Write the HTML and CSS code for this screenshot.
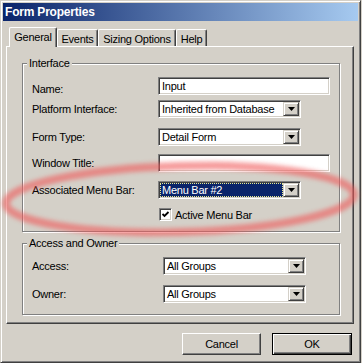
FILE: index.html
```html
<!DOCTYPE html>
<html>
<head>
<meta charset="utf-8">
<link rel="stylesheet" href="styles.css">
</head>
<body>
<div class="window">
  <div class="titlebar">Form Properties</div>
  <div class="body">
    <div class="tabs">
      <div class="tab active">General</div>
      <div class="tab t-events">Events</div>
      <div class="tab t-sizing">Sizing Options</div>
      <div class="tab t-help">Help</div>
    </div>
    <div class="panel">
      <fieldset class="group g-interface">
        <legend>Interface</legend>
        <div class="grid grid-interface">
          <div class="lbl low">Name:</div>
          <div class="edit wide">Input</div>
          <div class="lbl">Platform Interface:</div>
          <div class="combo"><div class="val">Inherited from Database</div><div class="btn"><svg width="7" height="4" viewBox="0 0 7 4"><path d="M0 0h7L3.5 4z"/></svg></div></div>
          <div class="lbl">Form Type:</div>
          <div class="combo"><div class="val">Detail Form</div><div class="btn"><svg width="7" height="4" viewBox="0 0 7 4"><path d="M0 0h7L3.5 4z"/></svg></div></div>
          <div class="lbl">Window Title:</div>
          <div class="edit wide"></div>
          <div class="lbl">Associated Menu Bar:</div>
          <div class="combo sel"><div class="val">Menu Bar #2</div><div class="btn"><svg width="7" height="4" viewBox="0 0 7 4"><path d="M0 0h7L3.5 4z"/></svg></div></div>
          <div class="lbl"></div>
          <div class="check"><span class="box"><svg width="9" height="9" viewBox="0 0 9 9"><path d="M1.5 4 L3.5 6 L7.5 2" fill="none" stroke="#000" stroke-width="1.8"/></svg></span><span>Active Menu Bar</span></div>
        </div>
      </fieldset>
      <fieldset class="group g-access">
        <legend>Access and Owner</legend>
        <div class="grid grid-access">
          <div class="lbl">Access:</div>
          <div class="combo"><div class="val">All Groups</div><div class="btn"><svg width="7" height="4" viewBox="0 0 7 4"><path d="M0 0h7L3.5 4z"/></svg></div></div>
          <div class="lbl">Owner:</div>
          <div class="combo"><div class="val">All Groups</div><div class="btn"><svg width="7" height="4" viewBox="0 0 7 4"><path d="M0 0h7L3.5 4z"/></svg></div></div>
        </div>
      </fieldset>
    </div>
    <div class="buttons">
      <div class="button">Cancel</div>
      <div class="button default">OK</div>
    </div>
  </div>
</div>
<svg class="annot" width="362" height="363" viewBox="0 0 362 363">
  <defs><filter id="soft" x="-10%" y="-50%" width="120%" height="200%"><feGaussianBlur stdDeviation="2"/></filter></defs>
  <ellipse cx="180" cy="199" rx="174" ry="33" transform="rotate(-1.5 180 199)" fill="none" stroke="#f05a5a" stroke-width="8" opacity="0.6" filter="url(#soft)"/>
</svg>
</body>
</html>
```
FILE: styles.css
```css
* { box-sizing: border-box; }
html, body { margin: 0; padding: 0; }
body {
  position: relative;
  width: 362px;
  height: 363px;
  overflow: hidden;
  background: #d4d0c8;
  font-family: "Liberation Sans", Arial, sans-serif;
  font-size: 11px;
  letter-spacing: -0.25px;
  color: #000;
}
.window {
  width: 361px;
  height: 363px;
  border: 1px solid;
  border-color: #d4d0c8 #404040 #404040 #d4d0c8;
  box-shadow: inset 1px 1px 0 #fff, inset -1px -1px 0 #808080;
  padding: 2px;
  display: flex;
  flex-direction: column;
}
.titlebar {
  height: 18px;
  line-height: 18px;
  padding-left: 2px;
  background: linear-gradient(90deg, #0a246a 0%, #a6caf0 100%);
  color: #fff;
  font-weight: bold;
  font-size: 12px;
  letter-spacing: -0.2px;
}
.body {
  padding: 0 3px;
  display: flex;
  flex-direction: column;
}
.tabs {
  height: 25px;
  display: flex;
  align-items: flex-end;
  padding-left: 3px;
  position: relative;
  z-index: 1;
}
.tab {
  height: 17px;
  border-top: 1px solid #fff;
  border-left: 1px solid #fff;
  border-right: 1px solid #404040;
  border-top-left-radius: 2px;
  border-top-right-radius: 2px;
  box-shadow: inset -1px 0 0 #808080;
  display: flex;
  align-items: center;
  justify-content: center;
  padding-top: 1px;
  background: #d4d0c8;
}
.tab.active {
  width: 48px;
  height: 20px;
  margin-bottom: -1px;
  padding-bottom: 2px;
}
.t-events { width: 41px; }
.t-sizing { width: 78px; }
.t-help { width: 31px; }
.panel {
  width: 348px;
  height: 278px;
  border: 1px solid;
  border-color: #fff #404040 #404040 #fff;
  box-shadow: inset -1px -1px 0 #808080;
  padding: 10px 0 0 15px;
  display: flex;
  flex-direction: column;
}
.group {
  margin: 0;
  width: 318px;
  min-width: 0;
  border: 1px solid #808080;
  box-shadow: inset 1px 1px 0 #fff, 1px 1px 0 #fff;
  padding: 7px 0 10px 9px;
}
.group legend {
  padding: 0 2px;
  margin-left: -5px;
  line-height: 13px;
  background: #d4d0c8;
}
.g-access {
  margin-top: 5px;
  padding-bottom: 11px;
}
.grid { display: grid; align-items: start; }
.grid-interface {
  grid-template-columns: 126px 1fr;
  grid-template-rows: 23px 28px 26px 27px 27px 13px;
}
.grid-access {
  grid-template-columns: 131px 1fr;
  grid-template-rows: 28px 18px;
}
.lbl { line-height: 18px; white-space: nowrap; }
.lbl.low { padding-top: 3px; }
.edit, .combo {
  height: 18px;
  border: 1px solid;
  border-color: #808080 #fff #fff #808080;
  box-shadow: inset 1px 1px 0 #404040, inset -1px -1px 0 #d4d0c8;
  background: #fff;
  line-height: 16px;
  padding: 0 3px;
  white-space: nowrap;
}
.edit.wide { width: 172px; }
.combo {
  width: 143px;
  display: flex;
  padding: 1px 1px 1px 1px;
}
.combo .val {
  flex: 1;
  padding-left: 2px;
  line-height: 14px;
}
.combo.sel .val {
  background: #0a246a;
  color: #fff;
  outline: 1px dotted #e8e890;
  outline-offset: -1px;
}
.combo .btn {
  width: 16px;
  height: 14px;
  background: #d4d0c8;
  border: 1px solid;
  border-color: #d4d0c8 #404040 #404040 #d4d0c8;
  box-shadow: inset 1px 1px 0 #fff, inset -1px -1px 0 #808080;
  display: flex;
  align-items: center;
  justify-content: center;
}
.combo .btn svg { display: block; fill: #000; }
.check {
  display: flex;
  align-items: center;
  gap: 3px;
  padding-left: 1px;
  height: 13px;
}
.check .box {
  width: 13px;
  height: 13px;
  border: 1px solid;
  border-color: #808080 #fff #fff #808080;
  box-shadow: inset 1px 1px 0 #404040, inset -1px -1px 0 #d4d0c8;
  background: #fff;
  display: flex;
  align-items: center;
  justify-content: center;
}
.check .box svg { display: block; }
.buttons {
  display: flex;
  justify-content: flex-end;
  gap: 11px;
  width: 348px;
  margin-top: 9px;
  padding-right: 2px;
}
.button {
  width: 79px;
  height: 22px;
  border: 1px solid;
  border-color: #fff #404040 #404040 #fff;
  box-shadow: inset -1px -1px 0 #808080;
  display: flex;
  align-items: center;
  justify-content: center;
  background: #d4d0c8;
}
.button.default {
  width: 80px;
  border-color: #000;
  box-shadow: inset 1px 1px 0 #fff, inset -1px -1px 0 #404040, inset -2px -2px 0 #808080;
}
.annot {
  position: absolute;
  left: 0;
  top: 0;
  pointer-events: none;
}
```
